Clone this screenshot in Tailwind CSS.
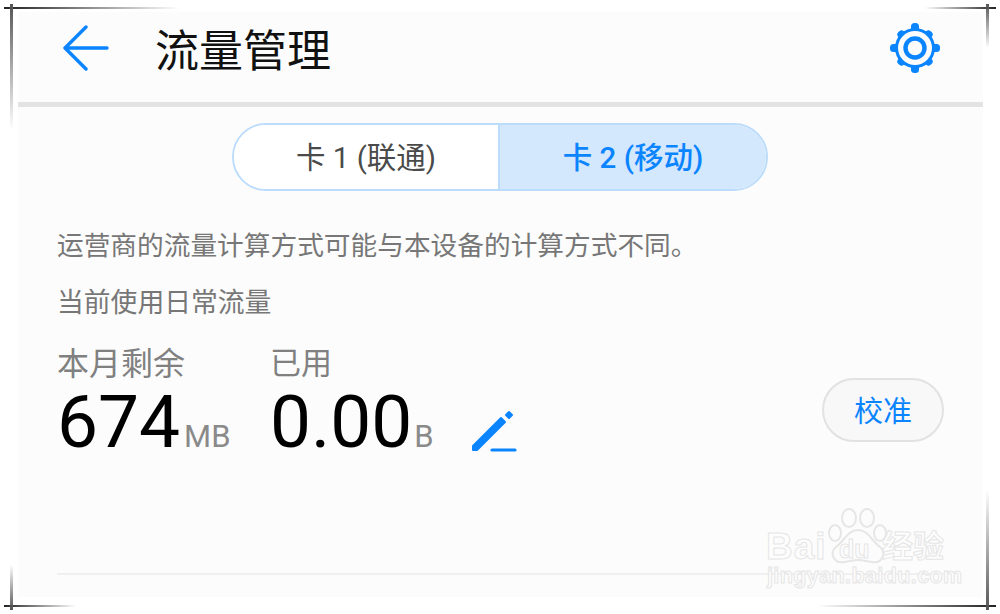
<!DOCTYPE html>
<html lang="zh">
<head>
<meta charset="utf-8">
<script src="https://cdn.jsdelivr.net/npm/@tailwindcss/browser@4"></script>
</head>
<body class="m-0 bg-white">
<div class="relative w-[1000px] h-[614px] overflow-hidden bg-white pt-[12px] pl-[18px] font-['Roboto','Noto_Sans_CJK_SC',sans-serif]">
  <div class="w-[965px] h-[585px] bg-[#fcfcfc] flex flex-col">
    <header class="h-[90px] shrink-0 flex items-center pl-[45px] pr-[43px]">
      <svg class="w-[46px] h-[46px] shrink-0 relative top-[-9px]" viewBox="0 0 46 46" fill="none" stroke="#0a84ff" stroke-width="3.4" stroke-linecap="round" stroke-linejoin="round"><path d="M44 23H3M23 2 2 23l21 21"/></svg>
      <h1 class="ml-[46px] text-[44px] leading-none font-normal text-[#111] relative top-[-5px]">流量管理</h1>
      <svg class="ml-auto w-[50px] h-[50px] shrink-0 relative top-[-9px]" viewBox="0 0 50 50">
        <g fill="#0a84ff"><circle cx="25" cy="25" r="20"/>
          <rect x="21" y="0" width="8" height="10" rx="3.5"/><rect x="21" y="40" width="8" height="10" rx="3.5"/>
          <rect x="0" y="21" width="10" height="8" rx="3.5"/><rect x="40" y="21" width="10" height="8" rx="3.5"/>
          <rect x="21" y="2" width="8" height="10" rx="3.5" transform="rotate(45 25 25)"/><rect x="21" y="2" width="8" height="10" rx="3.5" transform="rotate(135 25 25)"/>
          <rect x="21" y="2" width="8" height="10" rx="3.5" transform="rotate(225 25 25)"/><rect x="21" y="2" width="8" height="10" rx="3.5" transform="rotate(315 25 25)"/></g>
        <circle cx="25" cy="25" r="17" fill="#fcfcfc"/><circle cx="25" cy="25" r="9.5" fill="none" stroke="#0a84ff" stroke-width="4.4"/>
      </svg>
    </header>
    <div class="h-[5px] shrink-0 bg-[#e3e3e3]"></div>

    <div class="mt-[16px] ml-[214px] w-[536px] h-[68px] shrink-0 flex rounded-full border-2 border-[#bcdcfc] overflow-hidden text-[29.5px] leading-none">
      <div class="w-[266px] flex items-center justify-center bg-white text-[#4a4a4a] border-r-2 border-[#bcdcfc]"><span class="relative top-[2px]">卡 1 (联通)</span></div>
      <div class="flex-1 flex items-center justify-center bg-[#d3e7fd] text-[#0a84ff] font-medium"><span class="relative top-[2px]">卡 2 (移动)</span></div>
    </div>

    <p class="mt-[42px] ml-[39px] text-[26.7px] leading-none text-[#777]">运营商的流量计算方式可能与本设备的计算方式不同。</p>
    <p class="mt-[30px] ml-[39px] text-[26.8px] leading-none text-[#777]">当前使用日常流量</p>

    <div class="mt-[31px] ml-[39px] mr-[39px] flex items-start">
      <div class="w-[213px]">
        <div class="text-[32px] leading-none text-[#808080]">本月剩余</div>
        <div class="flex items-baseline mt-[6px] h-[72px] leading-[72px]"><span class="text-[73px] text-black">674</span><span class="ml-[4px] text-[31px] text-[#8a8a8a]">MB</span></div>
      </div>
      <div>
        <div class="text-[31px] leading-[32px] text-[#808080]">已用</div>
        <div class="flex items-baseline mt-[6px] h-[72px] leading-[72px]"><span class="text-[73px] text-black">0.00</span><span class="ml-[2px] text-[31px] text-[#8a8a8a]">B</span></div>
      </div>
      <svg class="ml-[36px] mt-[61px] w-[48px] h-[44px] shrink-0" viewBox="0 0 48 44" fill="none" stroke="#0a84ff" stroke-linecap="round" stroke-linejoin="round">
        <path d="M3 41V37L31 9l4 4L7 41H3Z" fill="#0a84ff" stroke-width="2"/>
        <path d="M36 6l3-3 3 3-3 3Z" fill="#0a84ff" stroke-width="2"/>
        <path d="M22 41h23" stroke-width="3.2"/>
      </svg>
      <button class="ml-auto mt-[30px] w-[122px] h-[64px] rounded-full border-2 border-[#e2e2e2] bg-[#f8f8f8] text-[#0a84ff] text-[29px] leading-none"><span class="relative top-[3px]">校准</span></button>
    </div>

    <div class="mt-[115px] ml-[39px] mr-[39px] h-[2px] bg-[#f0f0f0]"></div>
  </div>

  <!-- Watermark -->
  <div class="absolute left-[766px] top-[506px] w-[182px] h-[88px] text-[#fdfdfd] [-webkit-text-stroke:1px_#e6e6e6]">
    <svg class="absolute left-[60px] top-0 w-[66px] h-[60px]" viewBox="0 0 66 60" fill="#fcfcfc" stroke="#e6e6e6" stroke-width="2">
      <ellipse cx="23" cy="12" rx="7" ry="9"/><ellipse cx="41" cy="12" rx="7" ry="9"/><ellipse cx="9" cy="27" rx="6" ry="8"/><ellipse cx="54" cy="27" rx="6" ry="8"/>
      <path d="M32 24C22 24 19 34 10 41 3 47 8 58 18 56c6-1 10-2 14-2s8 1 14 2c10 2 15-9 8-15-9-7-12-17-22-17Z"/>
    </svg>
    <span class="absolute left-0 top-[22px] text-[37px] leading-none font-bold font-['Liberation_Sans',sans-serif] tracking-[1px]">Bai</span>
    <span class="absolute left-[73px] top-[31px] text-[25px] leading-none font-bold font-['Liberation_Sans',sans-serif]">du</span>
    <span class="absolute left-[116px] top-[25px] text-[31px] leading-none font-bold">经验</span>
    <span class="absolute left-[1px] top-[60px] text-[21.5px] leading-none font-['Liberation_Sans',sans-serif] font-bold tracking-[0.4px]">jingyan.baidu.com</span>
  </div>

  <!-- Corner marks -->
  <div class="absolute left-[4px] top-[7px] w-[176px] h-[2px] bg-gradient-to-r from-[#222] to-transparent"></div>
  <div class="absolute left-[10px] top-[4px] w-[3px] h-[126px] bg-gradient-to-b from-[#555] to-transparent"></div>
  <div class="absolute left-[925px] top-[7px] w-[71px] h-[2px] bg-gradient-to-l from-[#222] to-transparent"></div>
  <div class="absolute left-[986px] top-[4px] w-[3px] h-[44px] bg-gradient-to-b from-[#555] to-transparent"></div>
  <div class="absolute left-[4px] top-[605px] w-[72px] h-[2px] bg-gradient-to-r from-[#222] to-transparent"></div>
  <div class="absolute left-[10px] top-[565px] w-[3px] h-[45px] bg-gradient-to-t from-[#555] to-transparent"></div>
  <div class="absolute left-[817px] top-[605px] w-[179px] h-[2px] bg-gradient-to-l from-[#222] to-transparent"></div>
  <div class="absolute left-[986px] top-[490px] w-[3px] h-[120px] bg-gradient-to-t from-[#555] to-transparent"></div>
</div>
</body>
</html>
